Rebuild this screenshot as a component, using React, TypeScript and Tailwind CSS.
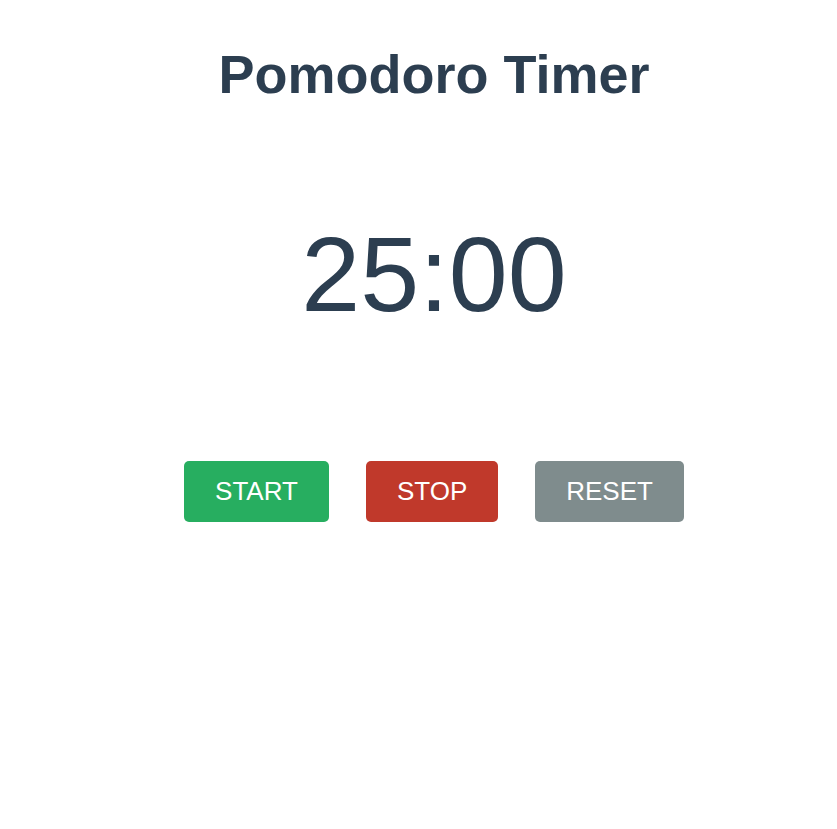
import React, { useState } from "react";

// simple pomodoro timer layout
export default function App() {
  const [seconds] = useState<number>(25 * 60);

  const mm = String(Math.floor(seconds / 60)).padStart(2, "0");
  const ss = String(seconds % 60).padStart(2, "0");

  return (
    <div
      className="min-h-screen bg-white pl-[31px] text-center text-[#2c3e50]"
      style={{ fontFamily: '"Liberation Sans", Arial, sans-serif' }}
    >
      <div className="flex flex-col items-center pt-[43px]">
        <h1 className="text-[54px] font-bold leading-[1.15]">Pomodoro Timer</h1>

        <div className="mt-[116px] text-[106px] leading-none">
          {mm}:{ss}
        </div>

        <div className="mt-[134px] flex gap-[37px]">
          <button className="h-[61px] rounded-[5px] bg-[#27ae60] px-[31px] text-[26px] text-white">
            START
          </button>
          <button className="h-[61px] rounded-[5px] bg-[#c0392b] px-[31px] text-[26px] text-white">
            STOP
          </button>
          <button className="h-[61px] rounded-[5px] bg-[#7f8c8d] px-[31px] text-[26px] text-white">
            RESET
          </button>
        </div>
      </div>
    </div>
  );
}
